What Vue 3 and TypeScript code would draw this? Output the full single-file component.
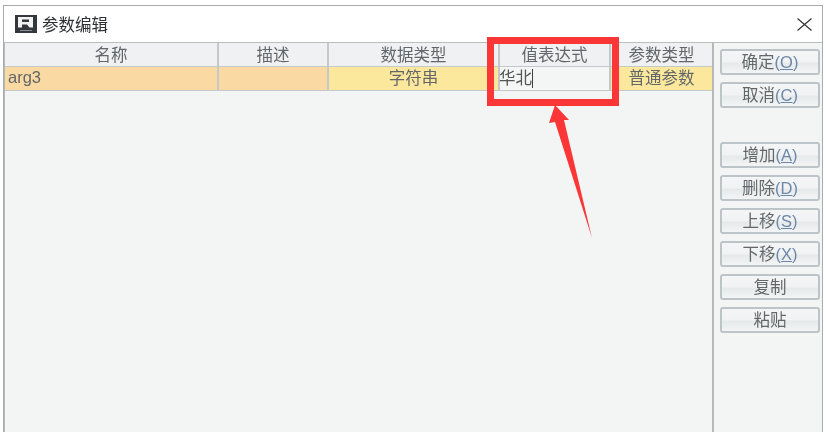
<template>
  <div class="window">
    <div class="titlebar">
      <svg class="logo" viewBox="0 0 22 18" width="22" height="18">
        <rect width="22" height="18" fill="#34383c" />
        <path d="M3 2H18V12.5H14.5L12 9.5H7V12.5H3ZM7 4.5V7H14V4.5Z" fill="#f2f2f2" fill-rule="evenodd" />
        <rect x="5" y="15" width="12" height="1" fill="#8a8e92" />
      </svg>
      <span class="title">参数编辑</span>
      <svg class="close" viewBox="0 0 15 13" width="15" height="13" preserveAspectRatio="none">
        <path d="M0.5 0.5l14 12M14.5 0.5l-14 12" stroke="#333" stroke-width="1.2" fill="none" />
      </svg>
    </div>
    <div class="content">
      <div class="table">
        <div class="row head">
          <div v-for="c in columns" :key="c" class="cell">{{ c }}</div>
        </div>
        <div class="row data">
          <div class="cell name">arg3</div>
          <div class="cell desc"></div>
          <div class="cell yellow">字符串</div>
          <div class="cell editing"><span class="value">华北</span><i class="caret"></i></div>
          <div class="cell yellow">普通参数</div>
        </div>
      </div>
      <div class="side">
        <div class="group">
          <button v-for="b in topButtons" :key="b.label" class="btn">
            {{ b.label }}<span v-if="b.key" class="key">(<u>{{ b.key }}</u>)</span>
          </button>
        </div>
        <div class="group">
          <button v-for="b in bottomButtons" :key="b.label" class="btn">
            {{ b.label }}<span v-if="b.key" class="key">(<u>{{ b.key }}</u>)</span>
          </button>
        </div>
      </div>
    </div>
    <div class="highlight"></div>
    <svg class="arrow" viewBox="0 0 50 136" width="50" height="136">
      <path d="M8 2L2 20L8 19L45 135L17 17L22 17Z" fill="#fb3636" />
    </svg>
  </div>
</template>

<script setup lang="ts">
interface Action {
  label: string
  key?: string
}

const columns = ['名称', '描述', '数据类型', '值表达式', '参数类型']

const topButtons: Action[] = [
  { label: '确定', key: 'O' },
  { label: '取消', key: 'C' },
]

const bottomButtons: Action[] = [
  { label: '增加', key: 'A' },
  { label: '删除', key: 'D' },
  { label: '上移', key: 'S' },
  { label: '下移', key: 'X' },
  { label: '复制' },
  { label: '粘贴' },
]
</script>

<style>
html,
body {
  margin: 0;
  background: #fff;
  overflow: hidden;
}
</style>

<style scoped>
.window {
  position: relative;
  box-sizing: border-box;
  width: 820px;
  height: 427px;
  margin: 5px 0 0 3px;
  display: flex;
  flex-direction: column;
  border: 1px solid #a8acac;
  border-bottom: 0;
  background: #f3f5f5;
  font-family: "Liberation Sans", "Noto Sans CJK SC", sans-serif;
  font-size: 16.5px;
  color: #63676a;
  filter: blur(0.45px);
}

.titlebar {
  height: 36px;
  flex: none;
  display: flex;
  align-items: center;
  padding: 0 10px 0 11px;
  background: #fff;
  border-bottom: 1px solid #b9bfbf;
}

.logo {
  margin-right: 5px;
}

.title {
  color: #2c2f33;
}

.close {
  margin-left: auto;
}

.content {
  flex: 1;
  display: flex;
  min-height: 0;
}

.table {
  width: 710px;
  flex: none;
  box-sizing: border-box;
  border-left: 1px solid #b4baba;
  border-right: 2px solid #b4baba;
}

.row {
  display: grid;
  grid-template-columns: 214px 110px 171px 111px 1fr;
  border-bottom: 1px solid #c3c9c9;
}

.cell {
  box-sizing: border-box;
  display: flex;
  align-items: center;
  justify-content: center;
  border-right: 2px solid #c3c9c9;
  line-height: 1;
}

.cell:last-child {
  border-right: 0;
}

.head .cell {
  height: 23px;
  padding-top: 2px;
  background: #eff1f3;
}

.data .cell {
  height: 23px;
}

.data .name {
  justify-content: flex-start;
  padding-left: 3px;
  padding-bottom: 2px;
  background: #fad9a3;
}

.data .desc {
  background: #fad9a3;
}

.data .yellow {
  background: #fce89c;
}

.data .editing {
  justify-content: flex-start;
  background: #f4f6f6;
  color: #555;
}

.value {
  margin-left: -1px;
}

.caret {
  width: 1px;
  height: 19px;
  background: #3d4143;
}

.side {
  flex: 1;
  padding: 6px 3px 0 6px;
  display: flex;
  flex-direction: column;
  gap: 34px;
}

.group {
  display: flex;
  flex-direction: column;
  gap: 7px;
}

.btn {
  width: 100px;
  height: 26px;
  padding: 0;
  border: 2px solid #bcc4c8;
  border-radius: 3px;
  background: linear-gradient(#f3f5f6 0%, #f0f2f3 50%, #e6e9ea 55%, #f2f4f5 100%);
  font: inherit;
  color: #63676a;
  line-height: 1;
}

.key {
  color: #6c87a8;
}

.highlight {
  position: absolute;
  left: 483px;
  top: 31px;
  width: 132px;
  height: 69px;
  box-sizing: border-box;
  border: 7px solid #fb3636;
}

.arrow {
  position: absolute;
  left: 543px;
  top: 97px;
}
</style>
